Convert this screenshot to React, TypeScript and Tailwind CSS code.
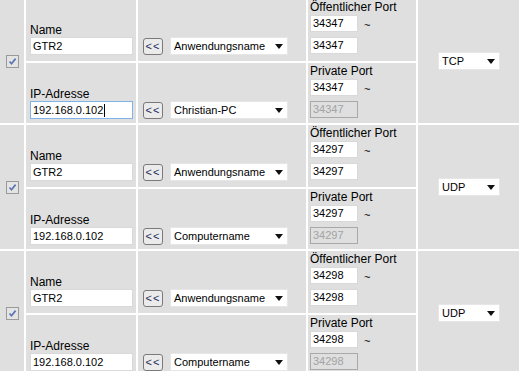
import { Fragment } from "react";

const font = { fontFamily: '"Liberation Sans", Arial, sans-serif' };

interface IRule {
  name: string;
  ip: string;
  app: string;
  computer: string;
  port: string;
  proto: string;
  focused?: boolean;
}

const rules: IRule[] = [
  { name: "GTR2", ip: "192.168.0.102", app: "Anwendungsname", computer: "Christian-PC", port: "34347", proto: "TCP", focused: true },
  { name: "GTR2", ip: "192.168.0.102", app: "Anwendungsname", computer: "Computername", port: "34297", proto: "UDP" },
  { name: "GTR2", ip: "192.168.0.102", app: "Anwendungsname", computer: "Computername", port: "34298", proto: "UDP" },
];

function Arrow() {
  return (
    <svg width="8" height="5" viewBox="0 0 8 5" className="shrink-0">
      <path d="M0 0h8L4 5z" fill="#111" />
    </svg>
  );
}

function FakeSelect({ value, width }: { value: string; width: string }) {
  return (
    <div
      className={`${width} h-[18px] bg-white border border-[#e6e6e6] flex items-center justify-between pl-[3px] pr-[4px] text-[11px] text-black leading-none`}
    >
      <span>{value}</span>
      <Arrow />
    </div>
  );
}

function TextBox({ value, focused }: { value: string; focused?: boolean }) {
  return (
    <div
      className={`w-[103px] h-[18px] bg-white border flex items-center pl-[2px] text-[11px] text-black leading-none ${
        focused ? "border-[#7eb4ea]" : "border-[#d9d9d9]"
      }`}
    >
      <span>{value}</span>
      {focused && <span className="w-px h-[13px] bg-black ml-px" />}
    </div>
  );
}

function PortBox({ value, disabled }: { value: string; disabled?: boolean }) {
  return (
    <div
      className={`w-[48px] h-[17px] border flex items-center pl-[2px] text-[11px] leading-none ${
        disabled
          ? "bg-[#dfdfdf] border-[#a9a9a9] text-[#a3a3a3]"
          : "bg-white border-[#d9d9d9] text-black"
      }`}
    >
      {value}
    </div>
  );
}

function Checkbox() {
  return (
    <div className="w-[13px] h-[13px] border border-[#9a9a9a] bg-[#e4e4e4] flex items-center justify-center">
      <svg width="9" height="9" viewBox="0 0 9 9">
        <path d="M1.5 4.5l2 2.2L7.6 1.6" stroke="#5a74b4" strokeWidth="1.7" fill="none" />
      </svg>
    </div>
  );
}

function ArrowButton() {
  return (
    <div className="w-[20px] h-[17px] border border-[#7a7a7a] rounded-[3px] bg-[#ebebeb] flex items-center justify-center text-[11px] leading-none text-[#1d2b5c] tracking-[1px]">
      &lt;&lt;
    </div>
  );
}

function PortCell({ label, value, disabled, pb }: { label: string; value: string; disabled?: boolean; pb: string }) {
  return (
    <div className={`bg-[#dfdfdf] flex flex-col justify-end pl-[2px] ${pb}`}>
      <div className="text-[12px] leading-[14px] text-black">{label}</div>
      <div className="flex items-center">
        <PortBox value={value} />
        <span className="text-[11px] ml-[6px] mt-[3px] text-black">~</span>
      </div>
      <div className="mt-[4px]">
        <PortBox value={value} disabled={disabled} />
      </div>
    </div>
  );
}

export default function App() {
  return (
    <div className="w-[519px] h-[371px] overflow-hidden bg-white" style={font}>
      <div className="grid grid-cols-[24px_110px_168px_108px_102px] grid-rows-[62px_60px_62px_60px_62px_60px] gap-[2px] bg-white mt-[-1px] w-max">
        {rules.map((r, i) => (
          <Fragment key={i}>
            <div className="row-span-2 bg-[#dfdfdf] flex items-center justify-center">
              <Checkbox />
            </div>
            <div className="bg-[#dfdfdf] flex flex-col justify-end pl-[4px] pb-[6px]">
              <div className="text-[12px] leading-[13px] text-black">Name</div>
              <TextBox value={r.name} />
            </div>
            <div className="bg-[#dfdfdf] flex items-end gap-[7px] pl-[5px] pb-[6px]">
              <ArrowButton />
              <FakeSelect value={r.app} width="w-[118px]" />
            </div>
            <PortCell label="Öffentlicher Port" value={r.port} pb="pb-[7px]" />
            <div className="row-span-2 bg-[#dfdfdf] flex items-center justify-center">
              <FakeSelect value={r.proto} width="w-[62px]" />
            </div>
            <div className="bg-[#dfdfdf] flex flex-col justify-end pl-[4px] pb-[4px]">
              <div className="text-[12px] leading-[13px] text-black">IP-Adresse</div>
              <TextBox value={r.ip} focused={r.focused} />
            </div>
            <div className="bg-[#dfdfdf] flex items-end gap-[7px] pl-[5px] pb-[4px]">
              <ArrowButton />
              <FakeSelect value={r.computer} width="w-[118px]" />
            </div>
            <PortCell label="Private Port" value={r.port} disabled pb="pb-[5px]" />
          </Fragment>
        ))}
      </div>
    </div>
  );
}
